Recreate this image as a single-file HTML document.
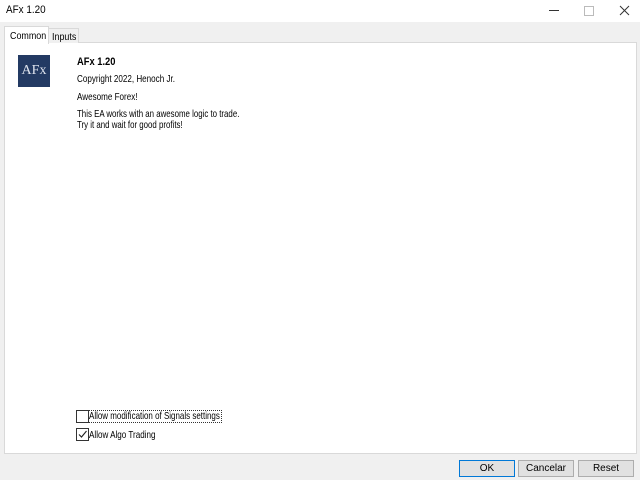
<!DOCTYPE html>
<html><head><style>
body{margin:0;width:640px;height:480px;background:#f0f0f0;font-family:"Liberation Sans",sans-serif;font-size:11px;position:relative;overflow:hidden;color:#000}
.a{position:absolute;white-space:nowrap}
.s{transform:scaleX(.77);transform-origin:0 0}
.title{left:0;top:0;width:640px;height:22px;background:#fff}
.panel{left:4px;top:42px;width:631px;height:410px;background:#fff;border:1px solid #d9d9d9}
.btn{top:460px;height:15px;width:54px;background:#e1e1e1;border:1px solid #adadad;text-align:center;line-height:15px;font-size:10px}
.cb{width:11px;height:11px;border:1px solid #333;background:#fff}
</style></head><body>
<div class="a title"></div>
<div class="a" style="left:6px;top:4px;font-size:11px;transform:scaleX(.9);transform-origin:0 0">AFx 1.20</div>
<div class="a" style="left:549px;top:10px;width:10px;height:1px;background:#333"></div>
<div class="a" style="left:584px;top:6px;width:8px;height:8px;border:1px solid #bbb"></div>
<svg class="a" style="left:619px;top:5px" width="11" height="11"><path d="M1 1L10 10M10 1L1 10" stroke="#333" stroke-width="1"/></svg>
<div class="a panel"></div>
<div class="a" style="left:4px;top:26px;width:43px;height:17px;background:#fff;border:1px solid #d9d9d9;border-bottom:none"></div>
<div class="a" style="left:10px;top:30px;font-size:10.5px;transform:scaleX(.85);transform-origin:0 0">Common</div>
<div class="a" style="left:48px;top:28px;width:29px;height:14px;background:#f0f0f0;border:1px solid #d9d9d9;border-bottom:none"></div>
<div class="a" style="left:52px;top:31px;font-size:10.5px;transform:scaleX(.85);transform-origin:0 0">Inputs</div>
<div class="a" style="left:18px;top:55px;width:32px;height:32px;background:#233a63;color:#dfe4ee;font-family:'Liberation Serif',serif;font-size:14px;line-height:32px;text-align:center">AFx</div>
<div class="a s" style="left:77px;top:56px;font-weight:bold;transform:scaleX(.85)">AFx 1.20</div>
<div class="a s" style="left:77px;top:73px;font-size:10.5px">Copyright 2022, Henoch Jr.</div>
<div class="a s" style="left:77px;top:91px;font-size:10.5px">Awesome Forex!</div>
<div class="a s" style="left:77px;top:109px;font-size:10.5px;line-height:11px;transform:scaleX(.75)">This EA works with an awesome logic to trade.<br>Try it and wait for good profits!</div>
<div class="a cb" style="left:76px;top:410px"></div>
<div class="a" style="left:88px;top:410px;width:132px;height:11px;border:1px dotted #333"></div>
<div class="a s" style="left:89px;top:410px;line-height:12px;font-size:10.5px;transform:scaleX(.76)">Allow modification of Signals settings</div>
<div class="a cb" style="left:76px;top:428px"></div>
<svg class="a" style="left:77px;top:429px" width="11" height="11"><path d="M2 5.5L4.5 8L9.5 2" stroke="#222" fill="none" stroke-width="1.1"/></svg>
<div class="a s" style="left:89px;top:429px;font-size:10.5px">Allow Algo Trading</div>
<div class="a btn" style="left:459px;border-color:#0078d7">OK</div>
<div class="a btn" style="left:518px">Cancelar</div>
<div class="a btn" style="left:578px">Reset</div>
</body></html>
